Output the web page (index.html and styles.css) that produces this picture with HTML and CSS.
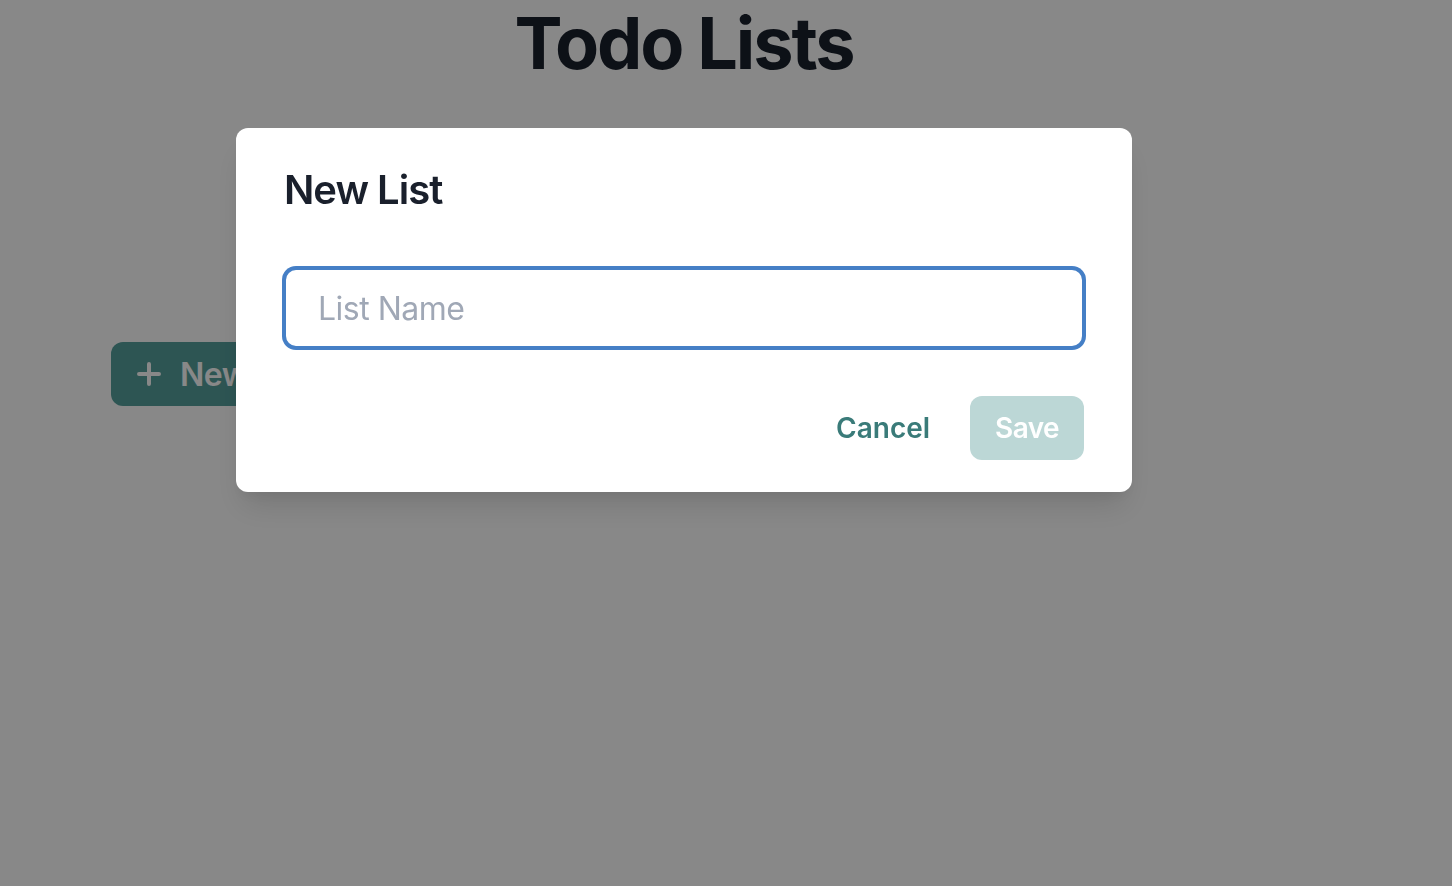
FILE: index.html
```html
<!DOCTYPE html>
<html lang="en">
<head>
<meta charset="utf-8">
<title>Todo Lists</title>
<link rel="stylesheet" href="styles.css">
</head>
<body>
<div class="page">
  <h1 class="title">Todo Lists</h1>
  <div class="toolbar">
    <button class="btn-new" type="button">
      <svg class="plus" viewBox="0 0 24 24" width="24" height="24" aria-hidden="true"><path d="M12 2v20M2 12h20" stroke="currentColor" stroke-width="4" stroke-linecap="round" fill="none"/></svg>
      <span>New List</span>
    </button>
  </div>
</div>
<div class="overlay"></div>
<div class="modal-wrap">
  <section class="modal">
    <header class="modal-header">New List</header>
    <div class="modal-body">
      <input class="field" type="text" placeholder="List Name">
    </div>
    <footer class="modal-footer">
      <button class="btn-cancel" type="button">Cancel</button>
      <button class="btn-save" type="button" disabled>Save</button>
    </footer>
  </section>
</div>
</body>
</html>
```

FILE: styles.css
```css
* { box-sizing: border-box; }
html, body { margin: 0; padding: 0; }
body {
  background: #ffffff;
  font-family: Inter, "Noto Sans", sans-serif;
  color: #1a202c;
  width: 1452px;
  height: 886px;
  overflow: hidden;
}
.page { width: 1368px; }
.title {
  margin: 0;
  font-size: 72px;
  line-height: 86px;
  font-weight: 700;
  text-align: center;
  letter-spacing: -2.1px;
}
.toolbar {
  margin-top: 256px;
  padding-left: 111px;
}
.btn-new {
  display: inline-flex;
  align-items: center;
  gap: 19px;
  height: 64px;
  padding: 0 26px;
  border: 0;
  border-radius: 12px;
  background: #559f9c;
  color: #ffffff;
  font-family: inherit;
  font-size: 32px;
  font-weight: 600;
  letter-spacing: -0.5px;
}
.plus { display: block; }
.overlay {
  position: fixed;
  inset: 0;
  background: rgba(0, 0, 0, 0.467);
}
.modal-wrap {
  position: fixed;
  top: 0;
  left: 0;
  width: 1368px;
  display: flex;
  justify-content: center;
  padding-top: 128px;
}
.modal {
  width: 896px;
  background: #ffffff;
  border-radius: 12px;
  box-shadow: 0 20px 30px -6px rgba(0, 0, 0, 0.12), 0 8px 12px -4px rgba(0, 0, 0, 0.06);
}
.modal-header {
  padding: 32px 48px;
  font-size: 40px;
  line-height: 60px;
  font-weight: 600;
  letter-spacing: -1px;
  color: #1a202c;
}
.modal-body { padding: 16px 48px; }
.field {
  display: block;
  width: 100%;
  height: 80px;
  padding: 0 32px;
  border: 2px solid #457fc6;
  box-shadow: 0 0 0 2px #457fc6;
  border-radius: 12px;
  outline: none;
  font-family: inherit;
  font-size: 32px;
  letter-spacing: -0.5px;
  color: #1a202c;
  background: #ffffff;
}
.field::placeholder { color: #a0a8b6; }
.modal-footer {
  display: flex;
  justify-content: flex-end;
  align-items: center;
  gap: 16px;
  padding: 32px 48px;
}
.btn-cancel, .btn-save {
  height: 64px;
  border: 0;
  border-radius: 12px;
  font-family: inherit;
  font-size: 28px;
  font-weight: 600;
}
.btn-cancel {
  padding: 0 24px;
  background: transparent;
  color: #3a7b79;
}
.btn-save {
  padding: 0 25px;
  background: #bcd7d6;
  color: #ffffff;
  letter-spacing: -0.6px;
}
```
